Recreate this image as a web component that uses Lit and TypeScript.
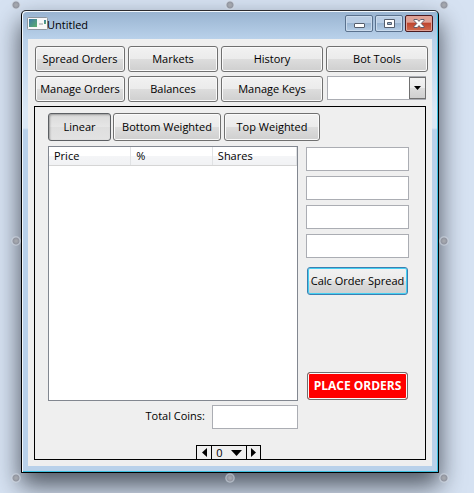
import { LitElement, html, css } from "lit";
import { customElement, state } from "lit/decorators.js";

@customElement("app-root")
export class AppRoot extends LitElement {
  @state() private mode = "Linear";

  static styles = css`
    :host {
      display: block;
      position: relative;
      box-sizing: border-box;
      min-height: 100vh;
      padding: 10px 35px 20px 21px;
      overflow: hidden;
      background: #d6e2f2;
      font: 11px/16px "Open Sans", "Noto Sans", sans-serif;
      color: #000;
    }
    *, *::before { box-sizing: border-box; }
    button, input, select { font: inherit; color: inherit; margin: 0; }

    .window {
      border: 1px solid #000;
      border-top-color: #2b2b2f;
      border-radius: 5px 5px 1px 1px;
      padding: 0 6px 6px;
      background: linear-gradient(#98b3d0, #b9d1ea 28px, #dbe8f5 100px, #dbe8f5 117px, #b9d1ea 119px);
      box-shadow: inset 1px 1px 0 #f2f8fd, inset -1px -1px 0 #3cc0e0,
        0 12px 24px 1px rgba(10, 15, 25, 0.66);
    }
    .titlebar { display: flex; align-items: center; height: 28px; }
    .title { flex: 1; font-weight: 400; font-size: 11px; margin: 0; }
    .app-icon { display: block; width: 21px; height: 13px; margin: 0 -1px 4px -1px; }
    .caption { display: flex; gap: 2px; margin-right: -1px; margin-bottom: 3px; }
    .cap {
      width: 28px;
      height: 17px;
      padding: 0;
      border: 1px solid #5b728e;
      border-radius: 2px;
      box-shadow: inset 0 0 0 1px #c9daec;
      background: linear-gradient(#b9cde4 0 50%, #9ab5d2 50%, #b4cde6);
    }
    .cap svg { display: block; margin: auto; }
    .cap.close {
      border-color: #4b1b20;
      box-shadow: inset 0 0 0 1px #e0a196;
      background: linear-gradient(#dfa296 0 40%, #bf4630 50%, #cf6c50);
    }

    .client { background: #efefef; padding: 7px 4px 6px 7px; }
    .nav { display: grid; grid-template-columns: 90fr 90fr 102fr 102fr; gap: 4px 3px; margin-bottom: 4px; }
    .btn {
      height: 26px;
      padding: 0;
      border: 1px solid #707070;
      border-radius: 3px;
      box-shadow: inset 0 0 0 1px #fafafa;
      background: linear-gradient(#f2f2f2, #ebebeb 50%, #dddddd 50%, #cfcfcf);
      white-space: nowrap;
    }
    .tall { height: 28px; }
    .btn.pressed {
      border-color: #5c5f63;
      background: linear-gradient(#dadada, #e6e6e6 50%, #dedede 50%, #e3e3e3);
      box-shadow: inset 1px 1px 2px #9b9b9b;
    }
    .btn.focus {
      border-color: #3c7fb1;
      box-shadow: inset 0 0 0 1px #45d0f2;
    }
    .btn.danger { background: #f00; color: #fff; font-size: 12px; font-weight: 700; }

    .combo { position: relative; height: 24px; margin: 0 2px 0 1px; }
    .combo select {
      appearance: none;
      display: block;
      width: 100%;
      height: 24px;
      border: 1px solid #abadb3;
      border-radius: 0;
      background: #fff;
      padding: 0 20px 0 4px;
    }
    .combo .arrow {
      position: absolute;
      inset: 1px 0 1px auto;
      width: 17px;
      border: 1px solid #707070;
      background: linear-gradient(#f2f2f2, #ebebeb 50%, #dddddd 50%, #cfcfcf);
      pointer-events: none;
    }
    .arrow svg { display: block; margin: 8px auto 0; }

    .panel { border: 1px solid #000; margin: 0 2px 0 -1px; padding: 6px 16px 0 13px; }
    .modes { display: flex; gap: 2px; margin-bottom: 5px; }
    .modes .btn:nth-child(1) { flex: 0 0 63px; }
    .modes .btn:nth-child(2) { flex: 0 0 108px; }
    .modes .btn:nth-child(3) { flex: 0 0 96px; margin-left: 1px; }

    .work { display: grid; grid-template-columns: minmax(0, 1fr) 103px; column-gap: 8px; }
    .list { height: 255px; border: 1px solid #828790; background: #fff; }
    table { width: 100%; border-collapse: collapse; table-layout: fixed; }
    th {
      width: 33%;
      height: 18px;
      padding: 0 5px;
      line-height: 17px;
      font-weight: 400;
      text-align: left;
      border-right: 1px solid #e0e2e4;
      border-bottom: 1px solid #d5d5d5;
      background: linear-gradient(#fff 50%, #f4f5f7 50%, #f1f2f4);
    }
    th:last-child { width: 34%; }
    .side { display: flex; flex-direction: column; gap: 5px; padding-top: 1px; }
    .field {
      display: block;
      width: 100%;
      height: 24px;
      border: 1px solid #abadb3;
      border-radius: 0;
      background: #fff;
      padding: 0 4px;
    }
    .side .btn { margin: 0 1px; }
    .side .focus { margin-top: 4px; }
    .side .danger { margin-top: auto; margin-bottom: 1px; }
    .total { display: flex; justify-content: flex-end; gap: 7px; margin-top: 4px; line-height: 22px; }
    .total .field { width: 86px; }

    .pager {
      display: grid;
      grid-template-columns: 14px 34px 13px;
      gap: 1px;
      width: 65px;
      height: 14px;
      margin: 16px auto 0;
      padding: 1px 1px 0;
      background: #000;
    }
    .pager button {
      display: flex;
      align-items: center;
      justify-content: center;
      gap: 8px;
      height: 13px;
      padding: 0;
      border: 0;
      line-height: 13px;
      background: #efefef;
    }

    .handle {
      position: absolute;
      width: 10px;
      height: 10px;
      margin: -5px 0 0 -5px;
      border-radius: 50%;
      background: radial-gradient(circle, #a4a7ad 0 1px, #9195a0 3px, rgba(205, 212, 222, 0.7) 4px, rgba(215, 222, 230, 0.3) 5px);
    }
    .l { left: 16px; } .c { left: 230px; } .r { left: calc(100% - 30px); }
    .t { top: 5px; } .m { top: 241px; } .b { top: 478px; }
  `;

  private modeButton(name: string) {
    const on = this.mode === name;
    return html`<button class="btn tall ${on ? "pressed" : ""}" aria-pressed=${on}
      @click=${() => (this.mode = name)}>${name}</button>`;
  }

  render() {
    const handles = ["l t", "c t", "r t", "l m", "r m", "l b", "c b", "r b"];
    return html`
      <main class="window">
        <header class="titlebar">
          <svg class="app-icon" viewBox="0 0 21 13">
            <defs><linearGradient id="g" x2="1" y2="1"><stop stop-color="#3d78a8"/><stop offset="1" stop-color="#5cb06a"/></linearGradient></defs>
            <rect x=".5" y=".5" width="20" height="12" rx="1" fill="#f8f8f8" stroke="#8d969f"/>
            <rect x="2" y="2" width="8" height="8" fill="url(#g)"/>
            <path d="M12 6h4v2h-4z" fill="#c6c8ca"/>
            <path d="M17 3h2v4h-2z" fill="url(#g)"/>
          </svg>
          <h1 class="title">Untitled</h1>
          <div class="caption">
            <button class="cap" aria-label="Minimize"><svg width="12" height="9"><rect x="1.5" y="4.5" width="10" height="4" rx=".5" fill="#fff" stroke="#555e6d"/></svg></button>
            <button class="cap" aria-label="Maximize"><svg width="11" height="9"><path d="M.5.5h10v8h-10zM3.500 3.500v2h4v-2z" fill="#fff" fill-rule="evenodd" stroke="#555e6d"/></svg></button>
            <button class="cap close" aria-label="Close"><svg width="12" height="9"><path d="M1 .5h3.300L6 2.400 7.700.5H11v1L8.200 4.500 11 7.500v1H7.700L6 6.600 4.300 8.500H1v-1l2.800-3L1 1.500z" fill="#fff" stroke="#535666" stroke-width=".9"/></svg></button>
          </div>
        </header>
        <div class="client">
          <nav class="nav">
            ${["Spread Orders", "Markets", "History", "Bot Tools", "Manage Orders", "Balances", "Manage Keys"].map(
              (t) => html`<button class="btn">${t}</button>`
            )}
            <div class="combo">
              <select aria-label="Key"><option></option></select>
              <span class="arrow"><svg width="7" height="4"><path d="M0 0h7L3.500 4z"/></svg></span>
            </div>
          </nav>
          <section class="panel">
            <div class="modes">${["Linear", "Bottom Weighted", "Top Weighted"].map((m) => this.modeButton(m))}</div>
            <div class="work">
              <div class="list">
                <table><thead><tr><th>Price</th><th>%</th><th>Shares</th></tr></thead></table>
              </div>
              <div class="side">
                ${[1, 2, 3, 4].map((n) => html`<input class="field" type="text" aria-label="Value ${n}" />`)}
                <button class="btn tall focus">Calc Order Spread</button>
                <button class="btn tall danger">PLACE ORDERS</button>
              </div>
              <div class="total"><label for="total">Total Coins:</label><input id="total" class="field" type="text" /></div>
            </div>
            <div class="pager">
              <button aria-label="Previous"><svg width="5" height="9"><path d="M5 0v9L0 4.500z"/></svg></button>
              <button>0 <svg width="11" height="6"><path d="M0 0h11L5.500 6z"/></svg></button>
              <button aria-label="Next"><svg width="5" height="9"><path d="M0 0v9l5-4.500z"/></svg></button>
            </div>
          </section>
        </div>
      </main>
      ${handles.map((h) => html`<span class="handle ${h}"></span>`)}
    `;
  }
}
